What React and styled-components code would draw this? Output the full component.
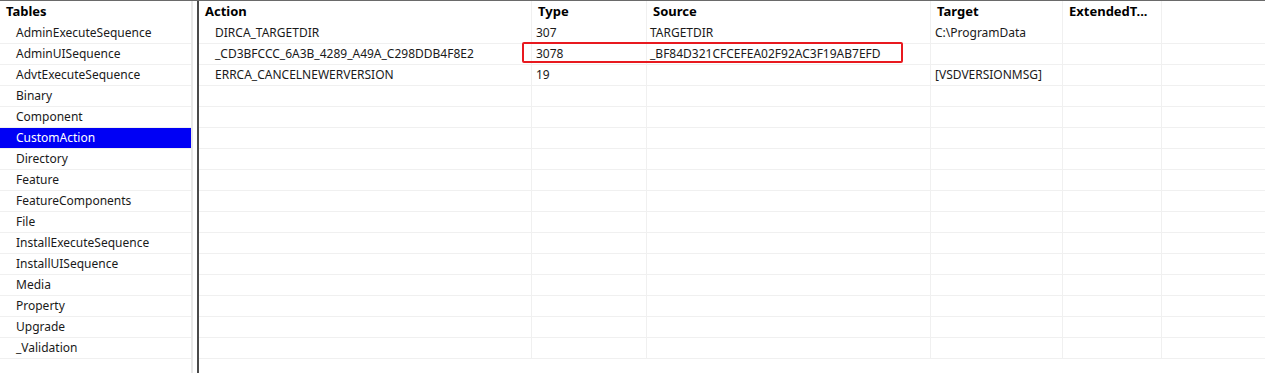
import React from "react";
import styled, { createGlobalStyle } from "styled-components";

const Global = createGlobalStyle`
  html, body { margin: 0; padding: 0; background: #fff; }
  body { font-family: "Noto Sans", "Open Sans", Arial, sans-serif; color: #000; }
`;

const Window = styled.div`
  display: flex;
  height: 372px;
  width: 1265px;
  border-top: 1px solid #6a6a6a;
  overflow: hidden;
  background: #fff;
`;

const LeftPane = styled.div`
  width: 191px;
  flex: none;
  border-right: 2px solid #e8e8e8;
  display: flex;
  flex-direction: column;
`;

const Splitter = styled.div`
  width: 4px;
  flex: none;
  background: #fff;
  border-right: 2px solid #4a4a4a;
`;

const RightPane = styled.div`
  position: relative;
  flex: 1;
  display: flex;
  flex-direction: column;
`;

const HeaderCell = styled.div`
  height: 22px;
  line-height: 21px;
  padding-left: ${(p) => p.$pad}px;
  font-weight: 700;
  font-size: 13px;
  white-space: nowrap;
  overflow: hidden;
`;

const ListItem = styled.div`
  height: 20px;
  line-height: 20px;
  border-bottom: 1px solid #f0f0f0;
  padding-left: 16px;
  font-size: 12px;
  white-space: nowrap;
  background: ${(p) => (p.$selected ? "#0000f5" : "transparent")};
  color: ${(p) => (p.$selected ? "#fff" : "#1a1a1a")};
`;

const cols = "333px 115px 284px 132px 99px 1fr";

const GridRow = styled.div`
  display: grid;
  grid-template-columns: ${cols};
  height: ${(p) => (p.$header ? 22 : 20)}px;
  border-bottom: ${(p) => (p.$header ? "none" : "1px solid #f0f0f0")};
`;

const Cell = styled.div`
  border-right: ${(p) => (p.$last ? "none" : "1px solid #f0f0f0")};
  padding-left: ${(p) => p.$pad}px;
  font-size: ${(p) => (p.$header ? 13 : 12)}px;
  font-weight: ${(p) => (p.$header ? 700 : 400)};
  line-height: ${(p) => (p.$header ? 21 : 20)}px;
  color: ${(p) => (p.$header ? "#000" : "#1a1a1a")};
  white-space: nowrap;
  overflow: hidden;
`;

const Highlight = styled.div`
  position: absolute;
  left: 323px;
  top: 41px;
  width: 377px;
  height: 17px;
  border: 2px solid #e8191f;
  border-radius: 2px;
  pointer-events: none;
`;

const tables = [
  "AdminExecuteSequence",
  "AdminUISequence",
  "AdvtExecuteSequence",
  "Binary",
  "Component",
  "CustomAction",
  "Directory",
  "Feature",
  "FeatureComponents",
  "File",
  "InstallExecuteSequence",
  "InstallUISequence",
  "Media",
  "Property",
  "Upgrade",
  "_Validation",
];

const headers = [
  { t: "Action", pad: 6 },
  { t: "Type", pad: 6 },
  { t: "Source", pad: 6 },
  { t: "Target", pad: 6 },
  { t: "ExtendedT...", pad: 6 },
];

const pads = [16, 4, 3, 4, 4];

const data = [
  ["DIRCA_TARGETDIR", "307", "TARGETDIR", "C:\\ProgramData", ""],
  ["_CD3BFCCC_6A3B_4289_A49A_C298DDB4F8E2", "3078", "_BF84D321CFCEFEA02F92AC3F19AB7EFD", "", ""],
  ["ERRCA_CANCELNEWERVERSION", "19", "", "[VSDVERSIONMSG]", ""],
];

const rows = [...data];
while (rows.length < 16) rows.push(["", "", "", "", ""]);

export default function App() {
  return (
    <>
      <Global />
      <Window>
        <LeftPane>
          <HeaderCell $pad={6}>Tables</HeaderCell>
          {tables.map((t) => (
            <ListItem key={t} $selected={t === "CustomAction"}>
              {t}
            </ListItem>
          ))}
        </LeftPane>
        <Splitter />
        <RightPane>
          <GridRow $header>
            {headers.map((h) => (
              <Cell key={h.t} $header $pad={h.pad}>
                {h.t}
              </Cell>
            ))}
            <Cell $header $last />
          </GridRow>
          {rows.map((r, i) => (
            <GridRow key={i}>
              {r.map((v, j) => (
                <Cell key={j} $pad={pads[j]}>
                  {v}
                </Cell>
              ))}
              <Cell $last />
            </GridRow>
          ))}
          <Highlight />
        </RightPane>
      </Window>
    </>
  );
}
